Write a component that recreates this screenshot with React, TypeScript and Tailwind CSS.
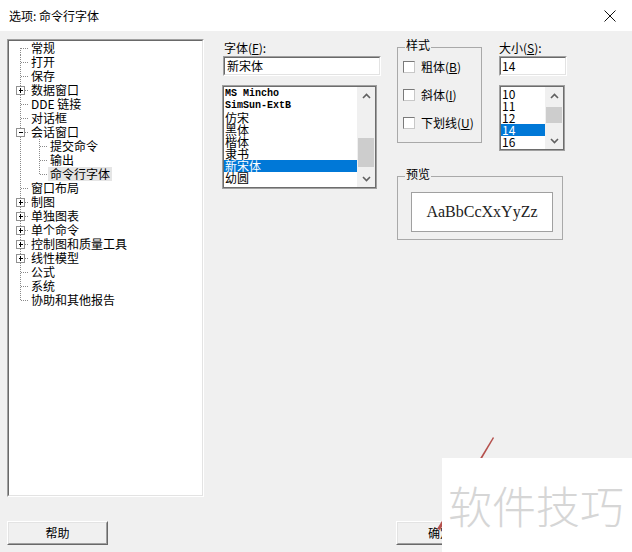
import React from "react";
import clsx from "clsx";

const cjk = "[font-family:'Noto_Sans_CJK_SC',sans-serif]";
const mono = "[font-family:'Liberation_Mono','Noto_Sans_CJK_SC',monospace]";
const serif = "[font-family:'Liberation_Serif',serif]";

type TreeItem = {
  t: string;
  lvl?: 0 | 1;
  box?: "+" | "-";
  sel?: boolean;
  first?: boolean;
  last?: boolean;
  lastChild?: boolean;
};

const TREE: TreeItem[] = [
  { t: "常规", first: true },
  { t: "打开" },
  { t: "保存" },
  { t: "数据窗口", box: "+" },
  { t: "DDE 链接" },
  { t: "对话框" },
  { t: "会话窗口", box: "-" },
  { t: "提交命令", lvl: 1 },
  { t: "输出", lvl: 1 },
  { t: "命令行字体", lvl: 1, sel: true, lastChild: true },
  { t: "窗口布局" },
  { t: "制图", box: "+" },
  { t: "单独图表", box: "+" },
  { t: "单个命令", box: "+" },
  { t: "控制图和质量工具", box: "+" },
  { t: "线性模型", box: "+" },
  { t: "公式" },
  { t: "系统" },
  { t: "协助和其他报告", last: true },
];

const FONTS: { t: string; latin?: boolean }[] = [
  { t: "MS Mincho", latin: true },
  { t: "SimSun-ExtB", latin: true },
  { t: "仿宋" },
  { t: "黑体" },
  { t: "楷体" },
  { t: "隶书" },
  { t: "新宋体" },
  { t: "幼圆" },
];

const SIZES = ["10", "11", "12", "14", "16"];

// dotted tree connector drawn per row so rows stay in normal flow
function TreeGutter({ item }: { item: TreeItem }) {
  const child = item.lvl === 1;
  const w = child ? 39 : 20;
  const dot = { stroke: "#8a8a8a", strokeWidth: 1, strokeDasharray: "1 1", shapeRendering: "crispEdges" as const };
  let rootTop = 0;
  let rootBottom = 14;
  if (item.first) rootTop = 7;
  if (item.last) rootBottom = 7;
  return (
    <svg width={w} height={14} className="shrink-0 block">
      {item.box ? (
        <>
          <line x1={11.5} y1={rootTop} x2={11.5} y2={3} {...dot} />
          <line x1={11.5} y1={12} x2={11.5} y2={rootBottom} {...dot} />
          <line x1={16} y1={7.5} x2={20} y2={7.5} {...dot} />
          <rect x={7.5} y={3.5} width={8} height={8} fill="#fff" stroke="#919191" shapeRendering="crispEdges" />
          <line x1={9.5} y1={7.5} x2={14} y2={7.5} stroke="#000" shapeRendering="crispEdges" />
          {item.box === "+" && <line x1={11.5} y1={5} x2={11.5} y2={10} stroke="#000" shapeRendering="crispEdges" />}
        </>
      ) : (
        <>
          <line x1={11.5} y1={rootTop} x2={11.5} y2={rootBottom} {...dot} />
          {!child && <line x1={12} y1={7.5} x2={20} y2={7.5} {...dot} />}
        </>
      )}
      {child && (
        <>
          <line x1={30.5} y1={0} x2={30.5} y2={item.lastChild ? 8 : 14} {...dot} />
          <line x1={31} y1={7.5} x2={39} y2={7.5} {...dot} />
        </>
      )}
    </svg>
  );
}

function Sunken({ className, children, inner }: { className?: string; children?: React.ReactNode; inner?: string }) {
  return (
    <div className={clsx("border border-t-[#a0a0a0] border-l-[#a0a0a0] border-r-white border-b-white", className)}>
      <div className={clsx("h-full w-full border border-t-[#696969] border-l-[#696969] border-r-[#e3e3e3] border-b-[#e3e3e3] bg-white", inner)}>
        {children}
      </div>
    </div>
  );
}

function Chevron({ up }: { up?: boolean }) {
  return (
    <svg width={9} height={6} className="block">
      <polyline
        points={up ? "1,5 4.5,1.5 8,5" : "1,1 4.5,4.5 8,1"}
        fill="none"
        stroke="#606060"
        strokeWidth={1.6}
      />
    </svg>
  );
}

function ScrollBar({ thumbTop, thumbH }: { thumbTop: number; thumbH: number }) {
  return (
    <div className="w-[18px] h-full bg-[#f0f0f0] flex flex-col">
      <div className="h-[17px] flex items-center justify-center shrink-0">
        <Chevron up />
      </div>
      <div className="flex-1 flex flex-col">
        <div className="shrink-0" style={{ height: thumbTop }} />
        <div className="bg-[#cdcdcd] mx-px" style={{ height: thumbH }} />
      </div>
      <div className="h-[17px] flex items-center justify-center shrink-0">
        <Chevron />
      </div>
    </div>
  );
}

function ListFrame({ className, children }: { className?: string; children: React.ReactNode }) {
  return (
    <div className={clsx("border border-[#a0a0a0]", className)}>
      <div className="h-full w-full border border-[#6d6d6d] bg-white flex overflow-hidden">{children}</div>
    </div>
  );
}

function Check({ label, k }: { label: string; k: string }) {
  return (
    <div className="flex items-center h-[14px] leading-[14px]">
      <div className="w-[12px] h-[12px] border border-t-[#7a7a7a] border-l-[#7a7a7a] border-r-[#c8c8c8] border-b-[#c8c8c8] bg-white shrink-0" />
      <span className="ml-[6px] text-[12px]">
        {label}(<span className="underline">{k}</span>)
      </span>
    </div>
  );
}

function Button({ label, className }: { label: string; className?: string }) {
  return (
    <div className={clsx("h-[24px] border border-t-white border-l-white border-r-[#696969] border-b-[#696969]", className)}>
      <div className="h-full w-full border border-t-[#e3e3e3] border-l-[#e3e3e3] border-r-[#a0a0a0] border-b-[#a0a0a0] bg-[#f0f0f0] flex items-center justify-center text-[12px] leading-none">
        {label}
      </div>
    </div>
  );
}

export default function App() {
  return (
    <div className={clsx("relative w-[632px] h-[552px] bg-[#f0f0f0] overflow-hidden text-black", cjk)}>
      {/* title bar */}
      <div className="h-[31px] bg-white flex items-center justify-between pl-[9px] pr-[16px]">
        <span className="text-[12px] leading-none">选项: 命令行字体</span>
        <svg width={12} height={12} className="block">
          <line x1={0.5} y1={0.5} x2={11.5} y2={11.5} stroke="#111" strokeWidth={1} />
          <line x1={11.5} y1={0.5} x2={0.5} y2={11.5} stroke="#111" strokeWidth={1} />
        </svg>
      </div>

      <div className="flex pl-[7px] pt-[7px]">
        {/* tree */}
        <Sunken className="w-[197px] h-[458px] mt-px">
          <div>
            {TREE.map((it) => (
              <div key={it.t} className="flex h-[14px] items-center">
                <TreeGutter item={it} />
                <span className={clsx("px-[2px] text-[12px] leading-[14px] h-[14px] whitespace-nowrap", it.sel && "bg-[#e5e5e5]")}>
                  {it.t}
                </span>
              </div>
            ))}
          </div>
        </Sunken>

        {/* font column */}
        <div className="ml-[18px] w-[159px] flex flex-col">
          <div className="mt-[3px] ml-[2px] text-[12px] leading-[14px] h-[14px]">
            字体(<span className="underline">F</span>):
          </div>
          <Sunken className="mt-px ml-px w-[158px] h-[20px]" inner="flex items-center pl-[2px]">
            <span className="text-[12px] leading-none">新宋体</span>
          </Sunken>
          <ListFrame className="mt-[9px] w-[155px] h-[104px]">
            <div className="flex-1 pt-px">
              {FONTS.map((f) => (
                <div
                  key={f.t}
                  className={clsx(
                    "h-[12px] leading-[12px] pl-px whitespace-nowrap",
                    f.latin ? clsx(mono, "text-[10px] font-bold") : "text-[12px]",
                    f.t === "新宋体" && "bg-[#0078d7] text-white"
                  )}
                >
                  {f.t}
                </div>
              ))}
            </div>
            <ScrollBar thumbTop={34} thumbH={29} />
          </ListFrame>
        </div>

        {/* right column */}
        <div className="ml-[16px] flex flex-col">
          <div className="flex">
            <fieldset className="w-[85px] h-[105px] border border-[#a9a9a9] p-0 m-0">
              <legend className="ml-[7px] px-px text-[12px] leading-[14px] pb-[4px]">样式</legend>
              <div className="pl-[5px] pt-[4px] flex flex-col gap-[14px]">
                <Check label="粗体" k="B" />
                <Check label="斜体" k="I" />
                <Check label="下划线" k="U" />
              </div>
            </fieldset>

            <div className="ml-[17px] w-[68px] flex flex-col">
              <div className="mt-[3px] text-[12px] leading-[14px] h-[14px]">
                大小(<span className="underline">S</span>):
              </div>
              <Sunken className="mt-px w-[68px] h-[20px]" inner="flex items-center pl-[1px]">
                <span className="text-[12px] leading-none">14</span>
              </Sunken>
              <ListFrame className="mt-[9px] w-[66px] h-[66px]">
                <div className="flex-1 pt-px">
                  {SIZES.map((s) => (
                    <div
                      key={s}
                      className={clsx(
                        "h-[12px] leading-[12px] pl-[1px] text-[12px]",
                        s === "14" && "bg-[#0078d7] text-white"
                      )}
                    >
                      {s}
                    </div>
                  ))}
                </div>
                <ScrollBar thumbTop={3} thumbH={16} />
              </ListFrame>
            </div>
          </div>

          <fieldset className="mt-[16px] w-[166px] h-[73px] border border-[#a9a9a9] p-0 m-0">
            <legend className="ml-[7px] px-px text-[12px] leading-[14px] pb-[4px]">预览</legend>
            <div className="ml-[13px] mt-[7px] w-[142px] h-[40px] border border-[#a0a0a0] bg-white flex items-center justify-center">
              <span className={clsx(serif, "text-[16px] leading-none text-[#222]")}>AaBbCcXxYyZz</span>
            </div>
          </fieldset>
        </div>
      </div>

      {/* buttons */}
      <div className="flex pl-[7px] mt-[24px]">
        <Button label="帮助" className="w-[101px]" />
        <Button label="确定" className="w-[88px] ml-[288px]" />
      </div>

      {/* red stroke artifact behind watermark */}
      <svg width={70} height={100} className="absolute left-[432px] top-[434px]">
        <polygon points="61,3 62,4 8,96 5,95" fill="#b5504c" />
      </svg>

      {/* watermark */}
      <div className="absolute left-[442px] top-[458px] w-[190px] h-[94px] bg-white flex items-center pl-[6px]">
        <span className="text-[44px] leading-none text-[#d6d6d6] font-light">软件技巧</span>
      </div>
    </div>
  );
}
